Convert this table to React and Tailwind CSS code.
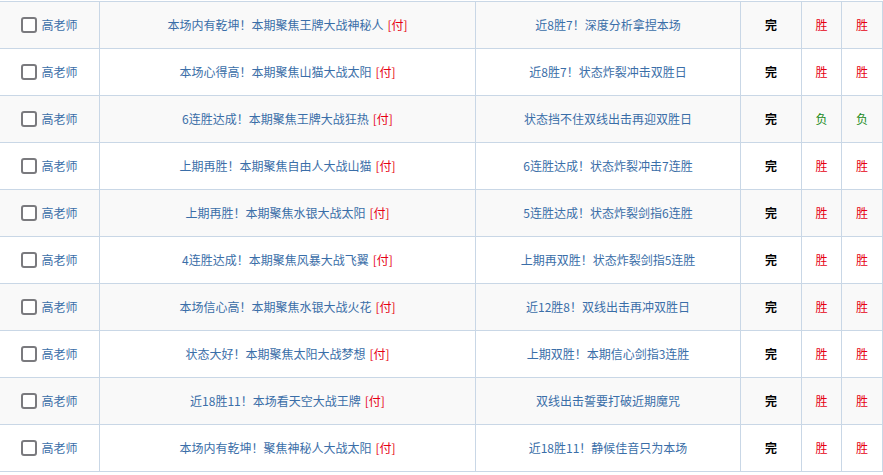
const rows = [
  ['本场内有乾坤！本期聚焦王牌大战神秘人', '近8胜7！深度分析拿捏本场', '胜', '胜'],
  ['本场心得高！本期聚焦山猫大战太阳', '近8胜7！状态炸裂冲击双胜日', '胜', '胜'],
  ['6连胜达成！本期聚焦王牌大战狂热', '状态挡不住双线出击再迎双胜日', '负', '负'],
  ['上期再胜！本期聚焦自由人大战山猫', '6连胜达成！状态炸裂冲击7连胜', '胜', '胜'],
  ['上期再胜！本期聚焦水银大战太阳', '5连胜达成！状态炸裂剑指6连胜', '胜', '胜'],
  ['4连胜达成！本期聚焦风暴大战飞翼', '上期再双胜！状态炸裂剑指5连胜', '胜', '胜'],
  ['本场信心高！本期聚焦水银大战火花', '近12胜8！双线出击再冲双胜日', '胜', '胜'],
  ['状态大好！本期聚焦太阳大战梦想', '上期双胜！本期信心剑指3连胜', '胜', '胜'],
  ['近18胜11！本场看天空大战王牌', '双线出击誓要打破近期魔咒', '胜', '胜'],
  ['本场内有乾坤！聚焦神秘人大战太阳', '近18胜11！静候佳音只为本场', '胜', '胜'],
]

function Result({ value }) {
  return (
    <span className={value === '负' ? 'text-[#1a8a1a]' : 'text-[#e60012]'}>{value}</span>
  )
}

export default function App() {
  return (
    <div
      className="w-[883px] h-[475px] overflow-hidden bg-white text-[12px] leading-none"
      style={{ fontFamily: '"Microsoft YaHei", "Noto Sans CJK SC", sans-serif' }}
    >
      <div className="mt-px border-t border-[#c9d7e6]">
        {rows.map((r, i) => (
          <div
            key={i}
            className={`flex h-[47px] border-b border-[#c9d7e6] ${i % 2 === 0 ? 'bg-[#f9f9f9]' : 'bg-white'}`}
          >
            <div className="w-[100px] border-r border-[#c9d7e6] flex items-center justify-center gap-1">
              <span className="w-[16px] h-[16px] border-2 border-[#7a7a7e] rounded-[3px] bg-white" />
              <span className="text-[#3a6ea8]">高老师</span>
            </div>
            <div className="w-[376px] border-r border-[#c9d7e6] flex items-center justify-center text-[#3a6ea8]">
              {r[0]}
              <span className="ml-1 text-[#e60012]">[付]</span>
            </div>
            <div className="w-[265px] border-r border-[#c9d7e6] flex items-center justify-center text-[#3a6ea8]">
              {r[1]}
            </div>
            <div className="w-[61px] border-r border-[#c9d7e6] flex items-center justify-center font-bold text-black">
              完
            </div>
            <div className="w-[40px] border-r border-[#c9d7e6] flex items-center justify-center">
              <Result value={r[2]} />
            </div>
            <div className="w-[41px] border-r border-[#c9d7e6] flex items-center justify-center">
              <Result value={r[3]} />
            </div>
          </div>
        ))}
      </div>
    </div>
  )
}
